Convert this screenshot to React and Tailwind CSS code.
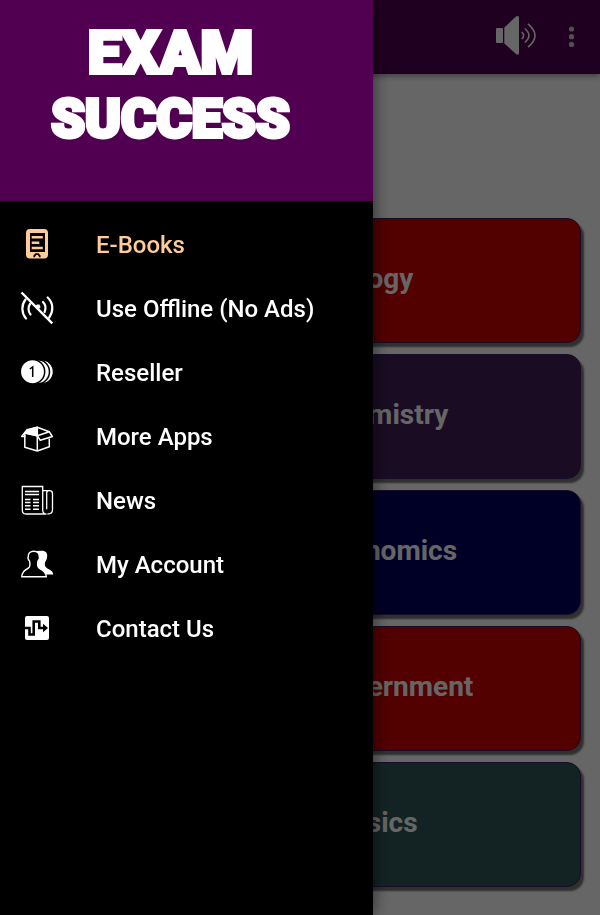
import React from "react";

const subjects = [
  { name: "Biology", color: "bg-[#cd0000]" },
  { name: "Chemistry", color: "bg-[#402058]" },
  { name: "Economics", color: "bg-[#000060]" },
  { name: "Government", color: "bg-[#cd0000]" },
  { name: "Physics", color: "bg-[#305858]" },
];

function Icon({ children }) {
  return (
    <svg viewBox="0 0 32 32" className="size-8 shrink-0 overflow-visible" fill="none" stroke="currentColor" aria-hidden="true">
      {children}
    </svg>
  );
}

function EBookIcon() {
  return (
    <Icon>
      <rect x="5" y="1" width="22" height="29.5" rx="4" fill="currentColor" stroke="none" />
      <path d="M9 5H24V24H9Z" fill="#000" stroke="none" />
      <path d="M10.7 9.2H21.8M10.7 14.7H18.3M10.7 20H21.8" strokeWidth="2.4" />
      <path d="M13.3 29.2V27.8L14.8 26.2H17.2L18.7 27.8V29.2" stroke="#000" strokeWidth="1.8" />
    </Icon>
  );
}

function OfflineIcon() {
  return (
    <Icon>
      <g strokeWidth="2.2" strokeLinecap="round">
        <path d="M4.5 7.5C.2 13 .3 21 5 26.5M9 12C6.9 15 7 19.5 9.5 22.5M26.7 5.500C32.4 11 32.7 19 28.2 25.500M22 10C24.8 13 25.3 16 23.6 20" />
      </g>
      <path d="M13.500 14.500L16 12.500H18.500L19.500 15L18 17Z" fill="currentColor" stroke="none" />
      <path d="M.5 .5L31.300 31.300" strokeWidth="2.400" />
    </Icon>
  );
}

function CoinsIcon() {
  return (
    <Icon>
      <g fill="currentColor" stroke="#000" strokeWidth="1.500">
        <circle cx="20.500" cy="15.700" r="12" />
        <circle cx="16.500" cy="15.700" r="12" />
        <circle cx="11.500" cy="15.700" r="12.200" />
      </g>
      <path d="M8.800 13L11.700 11V21" stroke="#000" strokeWidth="1.500" />
    </Icon>
  );
}

function BoxIcon() {
  return (
    <Icon>
      <g strokeWidth="1.500" strokeLinejoin="round">
        <path d="M3.800 15V27.300L16.300 31L28.300 26.800V18.500M16.300 15.700V31" />
        <path d="M16.300 7.300L6 9.800L.700 16.500H3.800V13L16.300 15.700Z" />
        <path d="M16.300 7.300L6 10.500L4.300 13L16.300 15.700Z" fill="currentColor" />
        <path d="M16.300 7.300L28.300 11.700L31.300 16.500L19.300 20.300L16.300 15.700L28.300 11.700" />
      </g>
    </Icon>
  );
}

function NewsIcon() {
  return (
    <Icon>
      <path d="M1.300 2.500H21.700V26C21.700 28.500 23 30 25.500 30H5C2.500 30 1.300 28.500 1.300 26ZM21.700 6.700H28.500C30.700 6.700 31.500 7.500 31.500 9.500V26C31.500 28.500 29.500 30 26.500 30M25.700 25.300V9C25.700 7.500 26.500 6.700 28 6.700" strokeWidth="1.300" />
      <path d="M4 7.500H18M4 10.500H18M4 15.500H9.500M12 15.500H18M4 18.500H9.500M12 18.500H18M4 21.700H9.500M12 21.700H18M4 25.300H9.500M12 25.300H18" strokeWidth="1.400" />
    </Icon>
  );
}

function AccountIcon() {
  return (
    <Icon>
      <path d="M21 2.800C24.700 2.800 26.500 5 26.200 8.500C26 11.500 24.800 13 24 14.500C23.600 17 24 19 26.500 20.500C30 22 32 23.500 32.300 26.500H14V3Z" fill="currentColor" stroke="none" />
      <path d="M12.700 3.300C9 3.300 7 5.500 7.300 8.500C6.500 9.500 7.300 12 8.500 13C9.300 16 9.300 18.500 7.500 20C3.500 22 .800 24 .800 28.800H25.300C25.300 24 22 22 18 20C16.300 18.500 16.300 16 17 13C18.300 12 19 9.500 18.200 8.500C18.500 5.500 16.500 3.300 12.700 3.300Z" fill="#000" strokeWidth="1.400" />
    </Icon>
  );
}

function ContactIcon() {
  return (
    <Icon>
      <rect x="4" y="4" width="24" height="24" rx="2" fill="currentColor" stroke="none" />
      <path d="M4 16H8.500V22.500H12.700V9.500H18.300V16H22.500" stroke="#000" strokeWidth="2.600" />
      <path d="M22 11.700L27 16L22 20.300Z" fill="#000" stroke="none" />
    </Icon>
  );
}

const menu = [
  { label: "E-Books", icon: EBookIcon, color: "text-[#ffcc99]" },
  { label: "Use Offline (No Ads)", icon: OfflineIcon, color: "text-white" },
  { label: "Reseller", icon: CoinsIcon, color: "text-white" },
  { label: "More Apps", icon: BoxIcon, color: "text-white" },
  { label: "News", icon: NewsIcon, color: "text-white" },
  { label: "My Account", icon: AccountIcon, color: "text-white" },
  { label: "Contact Us", icon: ContactIcon, color: "text-white" },
];

function AppBar() {
  return (
    <header className="relative flex h-[74px] items-center justify-end gap-[27px] bg-[#500050] pr-[21px] shadow-[0_2px_6px_rgba(0,0,0,0.4)]">
      <button type="button" aria-label="Sound" className="text-white">
        <svg viewBox="0 0 40 40" className="size-10 overflow-visible" fill="currentColor" aria-hidden="true">
          <rect y="11" width="7" height="15" rx="1" />
          <path d="M8.300 10.500L20 -.500Q23 -2 23 1V36Q23 39 20 37L8.300 26.500Z" />
          <path d="M25.700 15Q29.500 18.500 25.700 22M28.800 11.500Q37 18.500 28.800 25.500M32 6.800Q46 18.500 32 30.200" fill="none" stroke="currentColor" strokeWidth="1.600" />
        </svg>
      </button>
      <button type="button" aria-label="More options" className="text-[#d0c4d0]">
        <svg viewBox="0 0 16 24" className="h-6 w-4" fill="currentColor" aria-hidden="true">
          <circle cx="8.500" cy="4" r="2.600" />
          <circle cx="8.500" cy="11.700" r="2.600" />
          <circle cx="8.500" cy="19.400" r="2.600" />
        </svg>
      </button>
    </header>
  );
}

function Drawer() {
  return (
    <aside className="fixed inset-y-0 left-0 w-[373px] overflow-hidden bg-black shadow-[0_0_16px_rgba(0,0,0,0.6)]">
      <div className="h-[201px] bg-[#510051] pt-5 pr-8">
        <h1 className="text-center leading-[66px] font-black text-white [-webkit-text-stroke:4px_white]">
          <span className="block text-[60px]">EXAM</span>
          <span className="block text-[54px]">SUCCESS</span>
        </h1>
      </div>
      <nav className="pt-[11px]">
        <ul>
          {menu.map(({ label, icon: Glyph, color }) => (
            <li key={label}>
              <a href="#" className={`flex h-16 items-center gap-[43px] px-[21px] text-2xl font-medium ${color}`}>
                <Glyph />
                <span className="pt-0.5">{label}</span>
              </a>
            </li>
          ))}
        </ul>
      </nav>
    </aside>
  );
}

export default function App() {
  return (
    <div className="min-h-screen bg-white font-['Roboto',sans-serif]">
      <AppBar />
      <main className="flex flex-col gap-[11px] px-[19px] pt-36 pb-7">
        {subjects.map(({ name, color }) => (
          <button
            key={name}
            type="button"
            className={`h-[125px] w-full rounded-[14px] border border-[#3c1e64] pb-1 pl-[299px] text-left text-[28px] font-bold text-white shadow-[3px_4px_2px_#777] ${color}`}
          >
            {name}
          </button>
        ))}
      </main>
      <div className="fixed inset-0 bg-black/60" />
      <Drawer />
    </div>
  );
}
